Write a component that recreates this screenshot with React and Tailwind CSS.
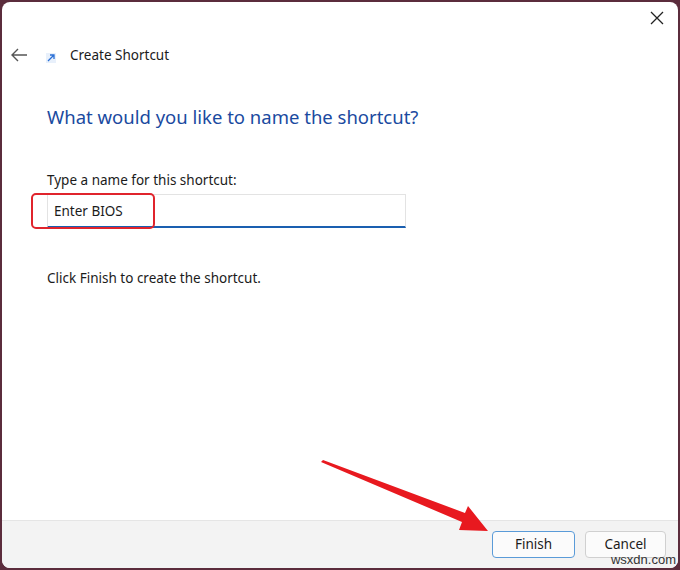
export default function App() {
  return (
    <div className="relative w-[680px] h-[570px] bg-[#5b2c3c] p-[2px]" style={{ fontFamily: '"Segoe UI","Noto Sans",sans-serif' }}>
      <div className="w-full h-full bg-white rounded-[8px] flex flex-col overflow-hidden">
        <div className="flex-1 relative">
          <div className="flex justify-end pt-[9px] pr-[14px]">
            <svg width="14" height="14" viewBox="0 0 14 14"><path d="M1 1L13 13M13 1L1 13" stroke="#222" strokeWidth="1.3" /></svg>
          </div>
          <div className="flex items-center mt-[20px] ml-[8px]">
            <svg width="18" height="14" viewBox="0 0 18 14"><path d="M17 7H2M8 1L2 7l6 6" stroke="#555" strokeWidth="1.4" fill="none" /></svg>
            <div className="ml-[18px] w-[10px] h-[10px] mt-[6px] flex items-center justify-center bg-[#e8f0fb]">
              <svg width="8" height="8" viewBox="0 0 8 8"><path d="M1 7L7 1M3 1h4v4" stroke="#2a6fd6" strokeWidth="1.3" fill="none" /></svg>
            </div>
            <span className="ml-[14px] text-[13.5px] text-[#1b1b1b]">Create Shortcut</span>
          </div>
          <div className="ml-[45px] mt-[38px] text-[18.5px] text-[#1a4aa0]">What would you like to name the shortcut?</div>
          <div className="ml-[45px] mt-[39px] text-[13.5px] text-[#1b1b1b]">Type a name for this shortcut:</div>
          <div className="relative ml-[45px] mt-[4px] w-[359px] h-[34px] border border-[#e3e3e3] border-b-2 border-b-[#1a5fb0] flex items-center pl-[6px] text-[13.5px] text-[#1b1b1b]">
            Enter BIOS
            <div className="absolute left-[-17px] top-[-2px] w-[124px] h-[36px] border-2 border-[#e0242c] rounded-[5px]" />
          </div>
          <div className="ml-[45px] mt-[40px] text-[13.5px] text-[#1b1b1b]">Click Finish to create the shortcut.</div>
        </div>
        <div className="h-[48px] bg-[#f3f3f3] border-t border-[#e5e5e5] flex items-center justify-end gap-[10px] pr-[12px]">
          <div className="w-[83px] h-[27px] bg-[#fbfbfb] border border-[#5a9bd8] rounded-[4px] flex items-center justify-center text-[13.5px] text-[#1b1b1b]">Finish</div>
          <div className="w-[81px] h-[27px] bg-[#fbfbfb] border border-[#d0d0d0] rounded-[4px] flex items-center justify-center text-[13.5px] text-[#1b1b1b]">Cancel</div>
        </div>
      </div>
      <svg className="absolute left-0 top-0" width="680" height="570" viewBox="0 0 680 570">
        <polygon points="321,462 323,460 465,513 468,506 488,531 459,530 462,522" fill="#e8191f" />
      </svg>
      <div className="absolute right-[4px] bottom-[1px] text-[13px] text-[#333]" style={{ fontFamily: '"Liberation Sans",sans-serif' }}>wsxdn.com</div>
    </div>
  );
}
